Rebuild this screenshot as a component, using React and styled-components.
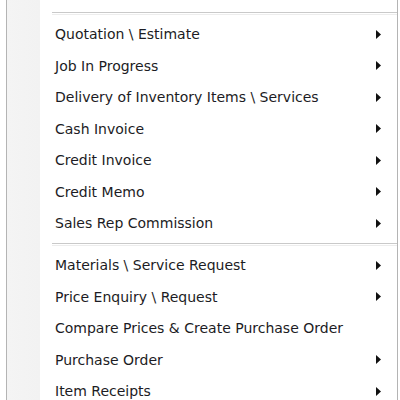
import React from "react";
import styled, { createGlobalStyle } from "styled-components";

const GlobalStyle = createGlobalStyle`
  html, body {
    margin: 0;
    padding: 0;
    background: #ffffff;
    overflow: hidden;
  }
`;

const MenuPanel = styled.div`
  margin: -23.5px 0 0 6px;
  width: 390px;
  height: 460px;
  border-left: 1px solid #b4b4b4;
  border-right: 1px solid #b4b4b4;
  background: linear-gradient(to right, #f4f4f4 0, #f2f2f2 33px, #ffffff 33px);
  font-family: "DejaVu Sans", "Liberation Sans", sans-serif;
  font-size: 14px;
  color: #1c1c24;
`;

const Item = styled.div`
  display: flex;
  align-items: center;
  justify-content: space-between;
  height: 31.5px;
  padding: 0 16px 0 48px;
  white-space: nowrap;
`;

const Separator = styled.div`
  display: flex;
  align-items: center;
  height: 10.5px;
  margin-left: 45px;

  &::before {
    content: "";
    flex: 1;
    height: 1px;
    border-top: 1px solid #c9c9c9;
    border-bottom: 1px solid #ededed;
  }
`;

const Arrow = () => (
  <svg width="5" height="9" viewBox="0 0 5 9">
    <path d="M0 0 L5 4.5 L0 9 Z" fill="#111" />
  </svg>
);

const groups = [
  [{ label: "Recurring Invoices \\ Bills", sub: true }],
  [
    { label: "Quotation \\ Estimate", sub: true },
    { label: "Job In Progress", sub: true },
    { label: "Delivery of Inventory Items \\ Services", sub: true },
    { label: "Cash Invoice", sub: true },
    { label: "Credit Invoice", sub: true },
    { label: "Credit Memo", sub: true },
    { label: "Sales Rep Commission", sub: true },
  ],
  [
    { label: "Materials \\ Service Request", sub: true },
    { label: "Price Enquiry \\ Request", sub: true },
    { label: "Compare Prices & Create Purchase Order", sub: false },
    { label: "Purchase Order", sub: true },
    { label: "Item Receipts", sub: true },
  ],
];

const App = () => {
  return (
    <>
      <GlobalStyle />
      <MenuPanel>
        {groups.map((group, gi) => (
          <React.Fragment key={gi}>
            {gi > 0 && <Separator />}
            {group.map((item) => (
              <Item key={item.label}>
                <span>{item.label}</span>
                {item.sub && <Arrow />}
              </Item>
            ))}
          </React.Fragment>
        ))}
      </MenuPanel>
    </>
  );
};

export default App;
